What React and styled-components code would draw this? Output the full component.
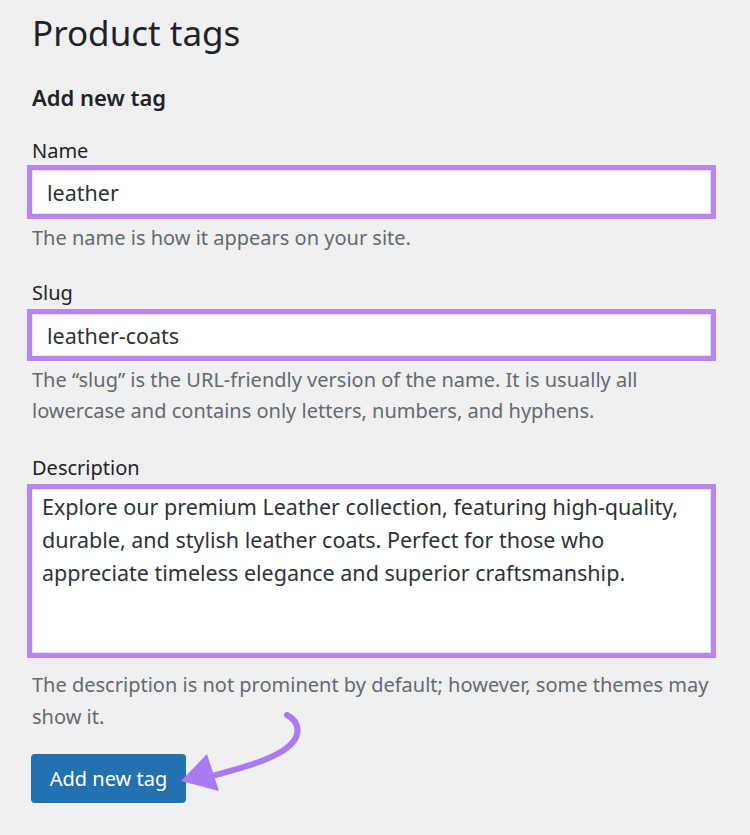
import styled, { createGlobalStyle } from "styled-components";

const GlobalStyle = createGlobalStyle`
    html, body {
        margin: 0;
        padding: 0;
        background: #f0f0f1;
    }
    body {
        font-family: "Noto Sans", "Open Sans", sans-serif;
        color: #1d2327;
    }
`;

const Page = styled.div`
    position: relative;
    width: 750px;
    height: 835px;
    box-sizing: border-box;
    padding: 11px 0 0 32px;
    overflow: hidden;
`;

const Title = styled.h1`
    margin: 0;
    font-size: 35px;
    line-height: 44px;
    font-weight: 400;
    color: #1d2327;
`;

const SubTitle = styled.h2`
    margin: 27px 0 0;
    font-size: 22px;
    line-height: 30px;
    font-weight: 600;
    color: #1d2327;
`;

const Form = styled.form`
    display: flex;
    flex-direction: column;
    width: 679px;
`;

const Field = styled.div`
    display: flex;
    flex-direction: column;
    margin-top: ${({ $gap }) => $gap}px;
`;

const Label = styled.label`
    font-size: 20px;
    line-height: 28px;
    color: #1d2327;
    margin-bottom: ${({ $below }) => $below}px;
`;

// purple highlight drawn round the fields
const highlight = `
    outline: 5px solid #b784f3;
    outline-offset: 0;
    border: 1px solid #ebe2fa;
    background: #fff;
    box-sizing: border-box;
    font-family: "Noto Sans", "Open Sans", sans-serif;
    font-size: 21.5px;
    color: #2c3338;
`;

const TextInput = styled.input`
    ${highlight}
    width: 679px;
    height: ${({ $h }) => $h}px;
    padding: 0 14px;
    margin: 0;
`;

const TextArea = styled.textarea`
    ${highlight}
    width: 679px;
    height: 164px;
    padding: 0 9px;
    margin: 0;
    line-height: 33px;
    resize: none;
`;

const Help = styled.p`
    margin: ${({ $top }) => $top}px 0 0;
    font-size: 20px;
    line-height: ${({ $lh }) => $lh || 31}px;
    color: #646970;
    width: 700px;
`;

const Button = styled.button`
    align-self: flex-start;
    margin-top: 21px;
    margin-left: -1px;
    width: 155px;
    height: 49px;
    border: none;
    border-radius: 4px;
    background: #2271b1;
    color: #fff;
    font-family: "Noto Sans", "Open Sans", sans-serif;
    font-size: 20px;
    padding: 0;
    cursor: pointer;
`;

const Arrow = styled.svg`
    position: absolute;
    left: 0;
    top: 0;
    pointer-events: none;
`;

export default function App() {
    return (
        <>
            <GlobalStyle />
            <Page>
                <Title>Product tags</Title>
                <SubTitle>Add new tag</SubTitle>
                <Form onSubmit={(e) => e.preventDefault()}>
                    <Field $gap={25}>
                        <Label htmlFor="tag-name" $below={5}>Name</Label>
                        <TextInput id="tag-name" $h={44} defaultValue="leather" />
                    </Field>
                    <Help $top={8}>The name is how it appears on your site.</Help>

                    <Field $gap={26}>
                        <Label htmlFor="tag-slug" $below={7}>Slug</Label>
                        <TextInput id="tag-slug" $h={42} defaultValue="leather-coats" />
                    </Field>
                    <Help $top={8}>
                        The “slug” is the URL-friendly version of the name. It is usually all lowercase and contains only letters, numbers, and hyphens.
                    </Help>

                    <Field $gap={28}>
                        <Label htmlFor="tag-description" $below={7}>Description</Label>
                        <TextArea
                            id="tag-description"
                            defaultValue="Explore our premium Leather collection, featuring high-quality, durable, and stylish leather coats. Perfect for those who appreciate timeless elegance and superior craftsmanship."
                        />
                    </Field>
                    <Help $top={16} $lh={32}>
                        The description is not prominent by default; however, some themes may show it.
                    </Help>

                    <Button type="submit">Add new tag</Button>
                </Form>

                <Arrow width="750" height="835" viewBox="0 0 750 835">
                    <path
                        d="M287 715 C300 722, 303 737, 284 750 C264 763, 236 769, 205 778"
                        fill="none"
                        stroke="#a97bf2"
                        strokeWidth="6"
                        strokeLinecap="round"
                    />
                    <polygon points="181,781 207,754 219,791" fill="#a97bf2" />
                </Arrow>
            </Page>
        </>
    );
}
